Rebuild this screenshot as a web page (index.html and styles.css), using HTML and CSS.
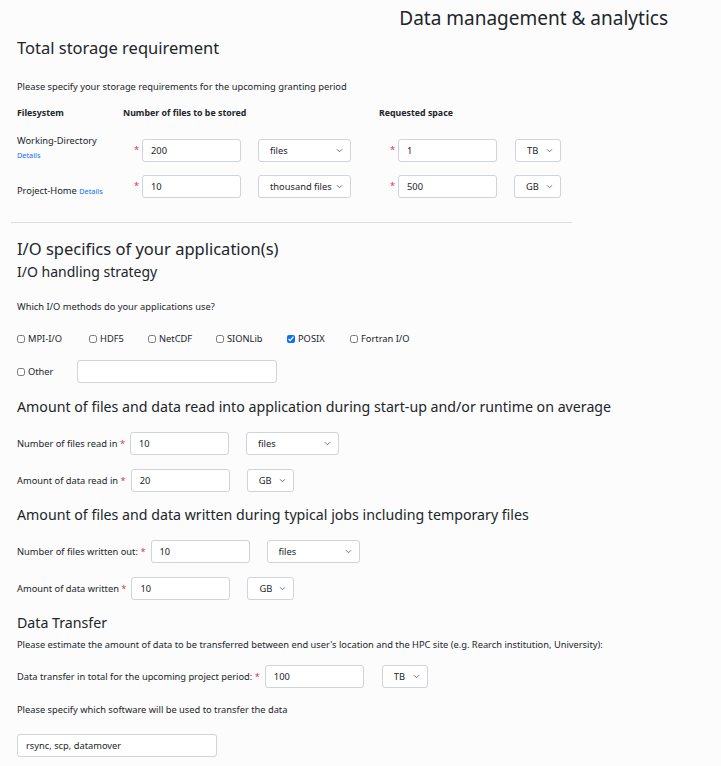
FILE: index.html
```html
<!DOCTYPE html>
<html lang="en">
<head>
<meta charset="utf-8">
<title>Data management &amp; analytics</title>
<link rel="stylesheet" href="styles.css">
</head>
<body>
<div class="page">
  <div class="title">Data management &amp; analytics</div>
  <h2 class="h-lg h-total">Total storage requirement</h2>
  <p class="note note-storage">Please specify your storage requirements for the upcoming granting period</p>

  <div class="storage">
    <div class="th">Filesystem</div>
    <div class="th">Number of files to be stored</div>
    <div class="th">Requested space</div>

    <div class="fs fs-1">Working-Directory<br><a class="details" href="#">Details</a></div>
    <div class="cell"><span class="req">*</span><input class="inp" value="200"><select class="sel sel-files"><option>files</option></select></div>
    <div class="cell"><span class="req">*</span><input class="inp" value="1"><select class="sel sel-tb"><option>TB</option></select></div>

    <div class="fs fs-2">Project-Home <a class="details" href="#">Details</a></div>
    <div class="cell"><span class="req">*</span><input class="inp" value="10"><select class="sel sel-files"><option>thousand files</option></select></div>
    <div class="cell"><span class="req">*</span><input class="inp" value="500"><select class="sel sel-gb"><option>GB</option></select></div>
  </div>

  <hr class="rule">

  <h2 class="h-lg h-io">I/O specifics of your application(s)</h2>
  <h3 class="h-md">I/O handling strategy</h3>
  <p class="note note-which">Which I/O methods do your applications use?</p>

  <div class="checks">
    <label class="chk chk-mpi"><input type="checkbox">MPI-I/O</label>
    <label class="chk chk-hdf"><input type="checkbox">HDF5</label>
    <label class="chk chk-net"><input type="checkbox">NetCDF</label>
    <label class="chk chk-sion"><input type="checkbox">SIONLib</label>
    <label class="chk chk-posix"><input type="checkbox" checked>POSIX</label>
    <label class="chk"><input type="checkbox">Fortran I/O</label>
  </div>
  <div class="other-row">
    <label class="chk chk-other"><input type="checkbox">Other</label>
    <input class="inp inp-wide">
  </div>

  <h3 class="h-sm h-read">Amount of files and data read into application during start-up and/or runtime on average</h3>
  <div class="row row-first">
    <span class="lbl">Number of files read in <span class="req">*</span></span>
    <input class="inp" value="10">
    <select class="sel sel-files"><option>files</option></select>
  </div>
  <div class="row">
    <span class="lbl">Amount of data read in <span class="req">*</span></span>
    <input class="inp" value="20">
    <select class="sel sel-gb"><option>GB</option></select>
  </div>

  <h3 class="h-sm h-write">Amount of files and data written during typical jobs including temporary files</h3>
  <div class="row row-first">
    <span class="lbl">Number of files written out: <span class="req">*</span></span>
    <input class="inp" value="10">
    <select class="sel sel-files"><option>files</option></select>
  </div>
  <div class="row">
    <span class="lbl">Amount of data written <span class="req">*</span></span>
    <input class="inp" value="10">
    <select class="sel sel-gb"><option>GB</option></select>
  </div>

  <h3 class="h-sm h-transfer">Data Transfer</h3>
  <p class="note note-estimate">Please estimate the amount of data to be transferred between end user's location and the HPC site (e.g. Rearch institution, University):</p>
  <div class="row row-transfer">
    <span class="lbl">Data transfer in total for the upcoming project period: <span class="req">*</span></span>
    <input class="inp" value="100">
    <select class="sel sel-tb"><option>TB</option></select>
  </div>
  <p class="note note-software">Please specify which software will be used to transfer the data</p>
  <input class="inp inp-wide inp-software" value="rsync, scp, datamover">
</div>
</body>
</html>
```

FILE: styles.css
```css
* { box-sizing: border-box; }
html, body { margin: 0; padding: 0; background: #fcfcfc; }
body {
  font-family: "Noto Sans", "Open Sans", sans-serif;
  color: #212529;
  font-size: 9.3px;
}
.page { padding: 0 0 0 17px; width: 721px; }

.title {
  margin-top: 5px;
  line-height: 26px;
  font-size: 19px;
  text-align: right;
  padding-right: 53px;
}
.h-lg { margin: 0; font-weight: 400; font-size: 16.5px; line-height: 24px; }
.h-total { margin-top: 5px; }
.h-io { margin-top: 14px; }
.h-md { margin: 0; font-weight: 400; font-size: 14px; line-height: 22px; }
.h-sm { margin: 0; font-weight: 400; font-size: 14.2px; line-height: 20px; }

.note { margin: 0; line-height: 14px; }
.note-storage { margin-top: 20px; }
.note-which { margin-top: 17px; }
.note-estimate { margin-top: 5px; }
.note-software { margin-top: 15px; }

.storage {
  display: grid;
  grid-template-columns: 106px 256px auto;
  grid-template-rows: 33px 36px 36px;
  margin-top: 12px;
}
.storage .th { font-weight: 700; line-height: 14px; font-size: 8.8px; }
.fs { line-height: 14px; }
.fs-1 { margin-top: -5px; }
.fs-2 { padding-top: 9px; }
.details { color: #0d6efd; text-decoration: none; font-size: 7.3px; }
.cell { display: flex; align-items: flex-start; padding-left: 11px; }
.cell .req { width: 8px; line-height: 14px; padding-top: 4px; }
.req { color: #dc3545; }

.inp {
  width: 99px;
  height: 23px;
  border: 1px solid #ced4da;
  border-radius: 3px;
  background: #fff;
  padding: 0 8px;
  font: inherit;
  color: #212529;
  outline: none;
}
.inp-wide { width: 200px; }
.sel {
  height: 23px;
  border: 1px solid #ced4da;
  border-radius: 3px;
  background: #fff url("data:image/svg+xml;utf8,<svg xmlns='http://www.w3.org/2000/svg' width='8' height='6' viewBox='0 0 8 6'><path d='M1 1.5 L4 4.5 L7 1.5' fill='none' stroke='%23555' stroke-width='1'/></svg>") no-repeat right 7px center;
  background-size: 7px 5px;
  -webkit-appearance: none;
  appearance: none;
  padding: 0 16px 0 11px;
  font: inherit;
  color: #212529;
  margin-left: 17px;
  outline: none;
}
.sel-files { width: 93px; }
.sel-tb { width: 46px; margin-left: 18px; }
.sel-gb { width: 47px; }

.rule {
  margin: 11px 0 0 -6px;
  width: 561px;
  border: 0;
  border-top: 1px solid #dcdcdc;
  height: 0;
}

.checks { display: flex; margin-top: 18px; line-height: 14px; }
.chk { display: inline-flex; align-items: center; }
.chk input {
  width: 8px; height: 8px; margin: 0 3px 0 0;
  accent-color: #0d6efd;
}
.chk-mpi { width: 72px; }
.chk-hdf { width: 59px; }
.chk-net { width: 68px; }
.chk-sion { width: 71px; }
.chk-posix { width: 63px; }
.other-row { display: flex; align-items: center; margin-top: 14px; }
.chk-other { width: 60px; }

.h-read { margin-top: 14px; }
.h-write { margin-top: 13px; }
.h-transfer { margin-top: 13px; }
.row { display: flex; align-items: center; margin-top: 14px; }
.row-first { margin-top: 15px; }
.row-transfer { margin-top: 13px; }
.lbl { margin-right: 5px; }
.inp-software { margin-top: 17px; display: block; }
```
